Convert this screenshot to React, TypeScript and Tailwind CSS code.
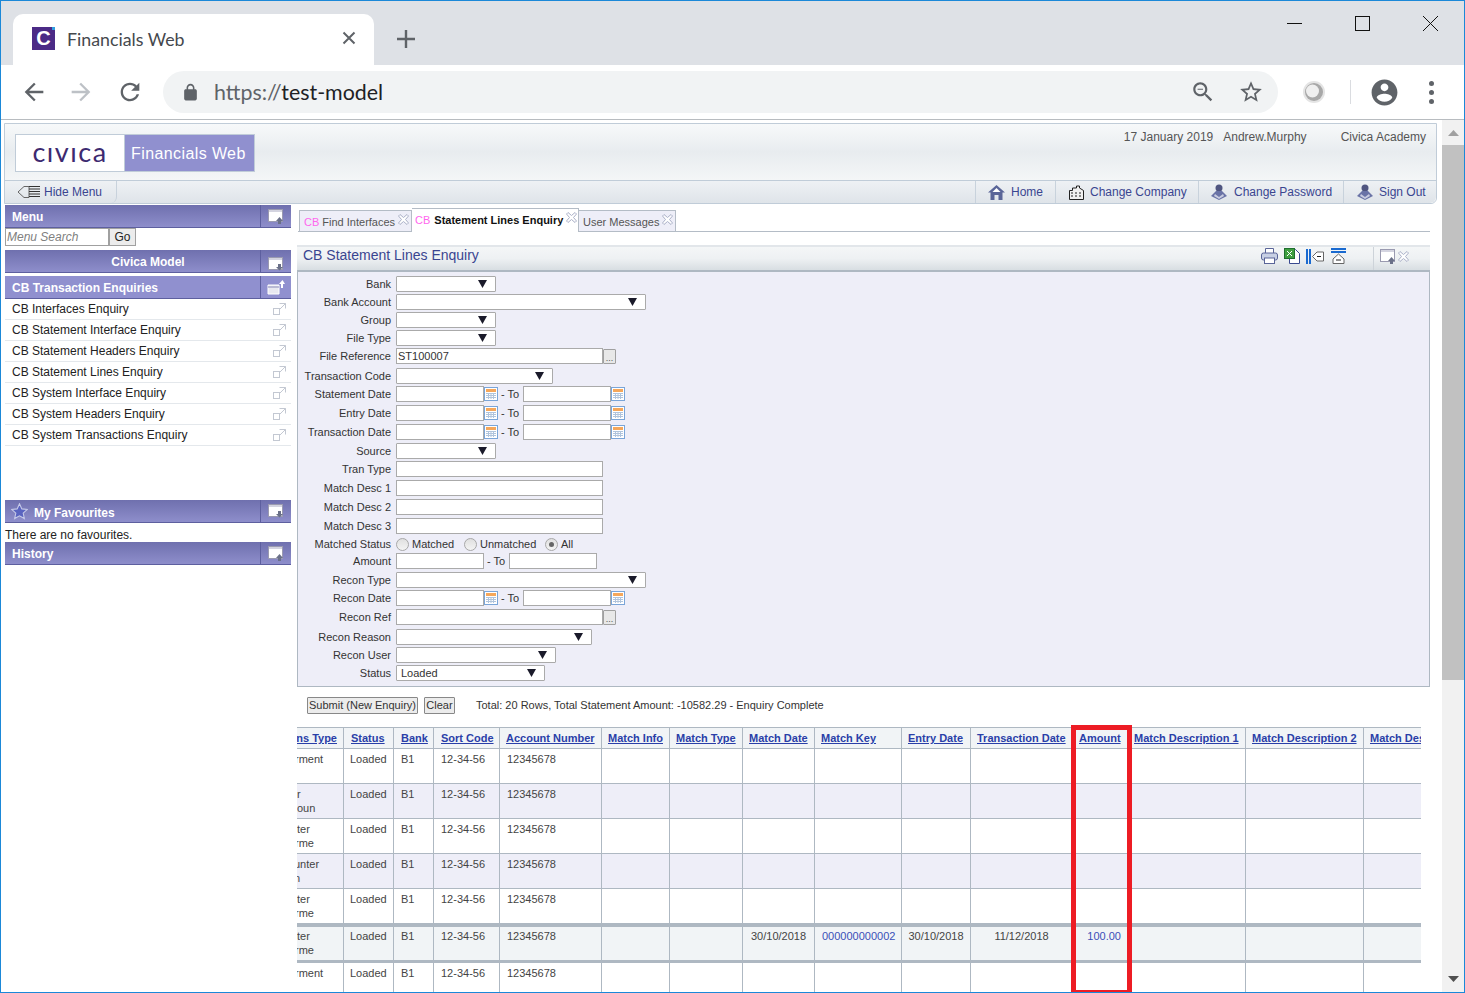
import React from 'react';

const FONT = "font-['Liberation_Sans',Arial,sans-serif]";

// little svg helpers for the chrome and the app icons
function Mat({ d, className }: { d: string; className: string }) {
  return (
    <svg viewBox="0 0 24 24" className={className} fill="currentColor">
      <path d={d} />
    </svg>
  );
}

function WinIcon({ down = false }: { down?: boolean }) {
  return (
    <svg width="17" height="15" viewBox="0 0 17 15">
      <rect x="0.5" y="0.5" width="14" height="12" fill="#fff" stroke="#9a9ab0" />
      <rect x="1" y="1" width="13" height="2" fill="#d4d4e0" />
      {down ? (
        <path d="M10 7h3v3h2l-3.500 3.500L8 10h2z" fill="#6a7088" />
      ) : (
        <path d="M10 15v-3H8l3.500-4 3.500 4h-2v3z" fill="#6a7088" />
      )}
    </svg>
  );
}

function ExtIcon() {
  return (
    <svg width="13" height="13" viewBox="0 0 13 13" fill="none" stroke="#c3c8d2">
      <rect x="0.5" y="5.5" width="6" height="6" />
      <path d="M6.5 0.5h6v5M12.5 0.5L6.5 6.5" />
    </svg>
  );
}

function CloseX() {
  return (
    <svg width="11" height="11" viewBox="0 0 11 11" fill="#fff" stroke="#aab0c8" className="shrink-0">
      <path d="M2 .5L5.500 3.500 9 .5l1.500 1.500L7.500 5.500l3 3.500L9 10.500 5.500 7.500 2 10.500.5 9l3-3.500-3-3.500z" />
    </svg>
  );
}

function CalIcon() {
  return (
    <svg width="14" height="14" viewBox="0 0 14 14" className="shrink-0">
      <rect x="0.5" y="0.5" width="13" height="13" fill="#fff" stroke="#7aa5d8" />
      <rect x="2" y="2" width="10" height="3" fill="#f5a75b" />
      <path d="M2 6.500h10M2 8.500h10M2 10.500h10M4.500 6v6M7 6v6M9.500 6v6" stroke="#b0c4dc" />
    </svg>
  );
}

function Person() {
  return (
    <svg width="18" height="16" viewBox="0 0 18 16" className="shrink-0">
      <circle cx="9" cy="4" r="3.500" fill="#4f5580" />
      <path d="M1 12l5-5h6l5 5-8 4z" fill="#6a73a6" />
      <path d="M5 10l4 3 4-3 1 2-5 3-5-3z" fill="#c8cce0" />
    </svg>
  );
}

function Select({ w, value = '' }: { w: string; value?: string }) {
  return (
    <div className={`${w} h-4 bg-white border border-[#aaaaaa] rounded-[1px] flex items-center justify-between pl-[4px] shrink-0`}>
      <span>{value}</span>
      <svg width="9" height="8" viewBox="0 0 9 8" className="mr-[8px]">
        <path d="M0 0h9L4.500 8z" fill="#1a1a2a" />
      </svg>
    </div>
  );
}

function Input({ w, value = '' }: { w: string; value?: string }) {
  return <div className={`${w} h-4 bg-white border border-[#aaaaaa] flex items-center pl-px shrink-0`}>{value}</div>;
}

function Dots() {
  return (
    <div className="w-[13px] h-[15px] bg-[#e8e8e8] border border-[#a0a0a0] rounded-[1px] flex items-end justify-center text-[9px] leading-[10px] text-[#555] shrink-0">...</div>
  );
}

function DateRange() {
  return (
    <>
      <Input w="w-[88px]" />
      <CalIcon />
      <span className="ml-[3px] mr-[3px] w-[19px] whitespace-nowrap">- To</span>
      <Input w="w-[88px]" />
      <CalIcon />
    </>
  );
}

function Radio({ label, on = false, cls }: { label: string; on?: boolean; cls: string }) {
  return (
    <div className={`flex items-center ${cls}`}>
      <span className="w-[13px] h-[13px] rounded-full border border-[#a8a8a8] bg-gradient-to-b from-[#e0e0e0] to-[#f4f4f4] flex items-center justify-center mr-[3px]">
        {on && <span className="w-[5px] h-[5px] rounded-full bg-[#666]" />}
      </span>
      {label}
    </div>
  );
}

const formRows: { label: string; cls: string; el: React.ReactNode }[] = [
  { label: 'Bank', cls: '', el: <Select w="w-[100px]" /> },
  { label: 'Bank Account', cls: '', el: <Select w="w-[250px]" /> },
  { label: 'Group', cls: '', el: <Select w="w-[100px]" /> },
  { label: 'File Type', cls: '', el: <Select w="w-[100px]" /> },
  { label: 'File Reference', cls: '', el: <><Input w="w-[207px]" value="ST100007" /><Dots /></> },
  { label: 'Transaction Code', cls: 'mt-[2px]', el: <Select w="w-[157px]" /> },
  { label: 'Statement Date', cls: '', el: <DateRange /> },
  { label: 'Entry Date', cls: 'mt-px', el: <DateRange /> },
  { label: 'Transaction Date', cls: 'mt-px', el: <DateRange /> },
  { label: 'Source', cls: 'mt-px', el: <Select w="w-[100px]" /> },
  { label: 'Tran Type', cls: '', el: <Input w="w-[207px]" /> },
  { label: 'Match Desc 1', cls: 'mt-px', el: <Input w="w-[207px]" /> },
  { label: 'Match Desc 2', cls: 'mt-px', el: <Input w="w-[207px]" /> },
  { label: 'Match Desc 3', cls: 'mt-px', el: <Input w="w-[207px]" /> },
  {
    label: 'Matched Status',
    cls: '',
    el: (
      <>
        <Radio label="Matched" cls="w-[68px]" />
        <Radio label="Unmatched" cls="w-[81px]" />
        <Radio label="All" on cls="" />
      </>
    ),
  },
  {
    label: 'Amount',
    cls: '-mt-px',
    el: (
      <>
        <Input w="w-[88px]" />
        <span className="ml-[3px] mr-[3px] w-[19px] whitespace-nowrap">- To</span>
        <Input w="w-[88px]" />
      </>
    ),
  },
  { label: 'Recon Type', cls: 'mt-px', el: <Select w="w-[250px]" /> },
  { label: 'Recon Date', cls: '', el: <DateRange /> },
  { label: 'Recon Ref', cls: 'mt-px', el: <><Input w="w-[207px]" /><Dots /></> },
  { label: 'Recon Reason', cls: 'mt-[2px]', el: <Select w="w-[196px]" /> },
  { label: 'Recon User', cls: '', el: <Select w="w-[160px]" /> },
  { label: 'Status', cls: '', el: <Select w="w-[149px]" value="Loaded" /> },
];

const menuItems = [
  'CB Interfaces Enquiry',
  'CB Statement Interface Enquiry',
  'CB Statement Headers Enquiry',
  'CB Statement Lines Enquiry',
  'CB System Interface Enquiry',
  'CB System Headers Enquiry',
  'CB System Transactions Enquiry',
];

// column widths come from the picture, first column is scrolled off to the left
const columns: { title: string; w: string; pl: string }[] = [
  { title: 'ns Type', w: 'w-[47px]', pl: 'justify-end pr-[6px]' },
  { title: 'Status', w: 'w-[50px]', pl: 'pl-[7px]' },
  { title: 'Bank', w: 'w-[40px]', pl: 'pl-[7px]' },
  { title: 'Sort Code', w: 'w-[66px]', pl: 'pl-[7px]' },
  { title: 'Account Number', w: 'w-[102px]', pl: 'pl-[6px]' },
  { title: 'Match Info', w: 'w-[68px]', pl: 'pl-[6px]' },
  { title: 'Match Type', w: 'w-[73px]', pl: 'pl-[6px]' },
  { title: 'Match Date', w: 'w-[72px]', pl: 'pl-[6px]' },
  { title: 'Match Key', w: 'w-[87px]', pl: 'pl-[6px]' },
  { title: 'Entry Date', w: 'w-[69px]', pl: 'pl-[6px]' },
  { title: 'Transaction Date', w: 'w-[102px]', pl: 'pl-[6px]' },
  { title: 'Amount', w: 'w-[55px]', pl: 'pl-[6px]' },
  { title: 'Match Description 1', w: 'w-[118px]', pl: 'pl-[6px]' },
  { title: 'Match Description 2', w: 'w-[118px]', pl: 'pl-[6px]' },
  { title: 'Match Description 3', w: 'w-[118px]', pl: 'pl-[6px]' },
];

// what is left visible of the scrolled off column, with its nudge
const rows = [
  { first: [['rment', '-ml-[2px]'], ['', '']], bg: 'bg-white', h: 'h-[35px]', sel: false },
  { first: [['r', ''], ['oun', '']], bg: 'bg-[#eeeef8]', h: 'h-[35px]', sel: false },
  { first: [['ter', ''], ['rme', '-ml-[2px]']], bg: 'bg-white', h: 'h-[35px]', sel: false },
  { first: [['unter', '-ml-[3px]'], ['n', '-ml-[3px]']], bg: 'bg-[#eeeef8]', h: 'h-[35px]', sel: false },
  { first: [['ter', ''], ['rme', '-ml-[2px]']], bg: 'bg-white', h: 'h-[35px]', sel: false },
  { first: [['ter', ''], ['rme', '-ml-[2px]']], bg: 'bg-[#f1f4f6]', h: 'h-[39px]', sel: true },
  { first: [['rment', '-ml-[2px]'], ['', '']], bg: 'bg-white', h: 'h-[35px]', sel: false },
];

function cellsFor(sel: boolean) {
  return [
    '', 'Loaded', 'B1', '12-34-56', '12345678', '', '',
    sel ? '30/10/2018' : '',
    sel ? '000000000002' : '',
    sel ? '30/10/2018' : '',
    sel ? '11/12/2018' : '',
    sel ? '100.00' : '',
    '', '', '',
  ];
}

function cellClass(i: number) {
  if (i === 11) return 'text-right pr-[6px] text-[#3a4fb8]';
  if (i === 8) return 'pl-[7px] text-[#3a4fb8]';
  if (i === 7 || i === 9 || i === 10) return 'text-center text-[#444]';
  if (i === 1) return 'pl-[6px] text-[#444]';
  return 'pl-[7px] text-[#444]';
}

function MenuHead({ children, light = false, down = false, open = false, center = false }: {
  children: React.ReactNode; light?: boolean; down?: boolean; open?: boolean; center?: boolean;
}) {
  return (
    <div className={`h-[23px] flex border-b border-[#5d5f9f] font-bold text-[12px] text-white ${light ? 'bg-[#9090cf]' : 'bg-gradient-to-b from-[#6f70ae] to-[#8e8ecb]'}`}>
      <div className={`flex-1 flex items-center pt-[2px] ${center ? 'justify-center pl-[31px]' : 'pl-[7px]'}`}>{children}</div>
      <div className={`w-[31px] border-l border-[#5d5f9f] flex items-center justify-center ${center ? 'pt-[6px]' : ''}`}>
        {open ? (
          <svg width="18" height="15" viewBox="0 0 18 15">
            <path d="M1 5h11v9H1z" fill="#e8e8f0" stroke="#fff" />
            <path d="M1 7h11" stroke="#8a8ab8" />
            <path d="M14 8V4h-2l3.500-4L18 4h-2v4z" fill="#fff" />
          </svg>
        ) : (
          <WinIcon down={down} />
        )}
      </div>
    </div>
  );
}

export default function App() {
  return (
    <div className={`${FONT} w-[1465px] h-[993px] overflow-hidden border border-[#1b88d8] bg-white text-[11px] text-[#222] flex flex-col`}>
      {/* tab strip */}
      <div className="h-[64px] bg-[#dee1e6] flex items-end pl-3 shrink-0 font-['Lato',sans-serif]">
        <div className="w-[361px] h-[51px] bg-white rounded-t-[10px] flex items-center pl-[19px] pb-[3px]">
          <span className="relative w-[23px] h-[23px] bg-[#4b2a86] flex items-center justify-center text-white font-bold text-[20px] leading-none font-['Liberation_Sans',sans-serif]">
            C
            <span className="absolute right-0 top-0 w-[3px] h-[3px] bg-[#2f9fe0]" />
          </span>
          <span className="ml-3 pt-[3px] text-[17.800px] text-[#45484d] w-[272px]">Financials Web</span>
          <svg width="14" height="14" viewBox="0 0 14 14" stroke="#5f6368" strokeWidth="2" className="ml-[3px]">
            <path d="M1.500 1.500l11 11M12.500 1.500l-11 11" />
          </svg>
        </div>
        <svg width="18" height="18" viewBox="0 0 18 18" stroke="#5f6368" strokeWidth="2.400" className="ml-[23px] mb-[17px]">
          <path d="M9 0v18M0 9h18" />
        </svg>
        <div className="ml-auto flex items-center self-start mt-[15px] mr-[26px] gap-[53px]">
          <svg width="15" height="1" className="block"><rect width="15" height="1" fill="#111" /></svg>
          <div className="w-[15px] h-[15px] border border-[#111]" />
          <svg width="15" height="15" viewBox="0 0 15 15" stroke="#111"><path d="M0 0l15 15M15 0L0 15" /></svg>
        </div>
      </div>

      {/* toolbar */}
      <div className="h-[55px] bg-white border-b border-[#b8bcc0] flex items-center shrink-0 font-['Lato',sans-serif]">
        <Mat className="w-[28px] h-[28px] ml-[19px] text-[#5f6368]" d="M20 11H7.830l5.590-5.590L12 4l-8 8 8 8 1.410-1.410L7.830 13H20v-2z" />
        <Mat className="w-[28px] h-[28px] ml-[19px] text-[#bdc1c6]" d="M12 4l-1.410 1.410L16.170 11H4v2h12.170l-5.580 5.590L12 20l8-8z" />
        <Mat className="w-[28px] h-[28px] ml-[21px] text-[#5f6368]" d="M17.650 6.350C16.200 4.900 14.210 4 12 4c-4.420 0-7.990 3.580-7.990 8s3.570 8 7.990 8c3.730 0 6.840-2.550 7.730-6h-2.080c-.82 2.330-3.040 4-5.650 4-3.310 0-6-2.690-6-6s2.690-6 6-6c1.660 0 3.140.69 4.220 1.780L13 11h7V4l-2.350 2.350z" />
        <div className="ml-[19px] w-[1115px] h-[42px] bg-[#f1f3f4] rounded-full flex items-center pl-[18px]">
          <Mat className="w-[19px] h-[19px] text-[#5f6368]" d="M18 8h-1V6c0-2.760-2.240-5-5-5S7 3.240 7 6v2H6c-1.100 0-2 .9-2 2v10c0 1.100.9 2 2 2h12c1.100 0 2-.9 2-2V10c0-1.100-.9-2-2-2zM9 6c0-1.660 1.340-3 3-3s3 1.340 3 3v2H9V6z" />
          <span className="ml-[14px] pt-px text-[21.400px] text-[#5f6368]">https://<span className="text-[#202124]">test-model</span></span>
          <Mat className="w-[26px] h-[26px] ml-auto text-[#5f6368]" d="M15.500 14h-.79l-.28-.27C15.410 12.590 16 11.110 16 9.500 16 5.910 13.090 3 9.500 3S3 5.910 3 9.500 5.910 16 9.500 16c1.610 0 3.090-.59 4.230-1.570l.27.28v.79l5 4.990L20.490 19l-4.990-5zm-6 0C7.010 14 5 11.990 5 9.500S7.010 5 9.500 5 14 7.010 14 9.500 11.990 14 9.500 14zM7 9h5v1H7z" />
          <Mat className="w-[26px] h-[26px] ml-[22px] mr-[14px] text-[#5f6368]" d="M22 9.240l-7.190-.62L12 2 9.190 8.630 2 9.240l5.460 4.730L5.820 21 12 17.270 18.180 21l-1.630-7.030L22 9.240zM12 15.400l-3.760 2.270 1-4.280-3.320-2.880 4.380-.38L12 6.100l1.710 4.040 4.380.38-3.320 2.880 1 4.280L12 15.400z" />
        </div>
        <svg width="22" height="22" viewBox="0 0 22 22" className="ml-[25px]">
          <circle cx="11" cy="11" r="11" fill="#e4e4e4" />
          <circle cx="11" cy="11" r="9" fill="#a8a8a8" />
          <circle cx="9.500" cy="10" r="6.500" fill="#efefef" />
        </svg>
        <span className="ml-[25px] w-px h-[24px] bg-[#dadce0]" />
        <Mat className="w-[31px] h-[31px] ml-[18px] text-[#5f6368]" d="M12 2C6.480 2 2 6.480 2 12s4.480 10 10 10 10-4.480 10-10S17.520 2 12 2zm0 3c1.660 0 3 1.340 3 3s-1.340 3-3 3-3-1.340-3-3 1.340-3 3-3zm0 14.200c-2.500 0-4.710-1.280-6-3.220.03-1.990 4-3.080 6-3.080 1.990 0 5.970 1.090 6 3.080-1.290 1.940-3.500 3.220-6 3.220z" />
        <div className="ml-[29px] flex flex-col gap-[4px]">
          <span className="w-[5px] h-[5px] rounded-full bg-[#5f6368]" />
          <span className="w-[5px] h-[5px] rounded-full bg-[#5f6368]" />
          <span className="w-[5px] h-[5px] rounded-full bg-[#5f6368]" />
        </div>
      </div>

      {/* page + scrollbar */}
      <div className="flex-1 flex min-h-0 relative">
        <div className="w-[1441px] pl-[3px] pt-[3px] flex flex-col min-h-0 shrink-0">
          {/* app header */}
          <div className="w-[1433px] h-[81px] border border-[#c0ccd8] rounded-br-[6px] flex flex-col shrink-0">
            <div className="h-[56px] bg-gradient-to-b from-[#f7f9fa] via-[#e8ecef] to-[#f4f6f7] flex justify-between pl-[10px] pr-[10px]">
              <div className="flex mt-[10px] h-[38px]">
                <div className="w-[110px] bg-white border border-[#c0ccd8] flex items-center justify-center font-['Lato',sans-serif] text-[#3d2a70] text-[27px] tracking-[1.500px] leading-none pb-[3px]">cıvıca</div>
                <div className="w-[130px] bg-[#9090cf] border border-[#c0ccd8] border-l-0 flex items-center pl-[6px] pt-px text-white text-[16px] tracking-[0.400px]">Financials Web</div>
              </div>
              <div className="flex mt-[4px] text-[12px] text-[#555]">
                <span>17 January 2019</span>
                <span className="ml-[10px]">Andrew.Murphy</span>
                <span className="ml-[34px]">Civica Academy</span>
              </div>
            </div>
            <div className="flex-1 border-t border-[#c0ccd8] bg-gradient-to-b from-[#eef1f4] to-[#dfe4e9] flex justify-between text-[12px] text-[#3a4590] rounded-br-[6px]">
              <div className="w-[112px] border-r border-[#c8d2dc] rounded-b-[6px] flex items-center pl-3 gap-[4px]">
                <svg width="23" height="14" viewBox="0 0 23 14" fill="none" stroke="#666">
                  <path d="M7 1.500L1 7l6 5.500h5v-11z" />
                  <path d="M12 1.500h11M12 4h11M12 6.500h11M12 9h11M12 11.500h11" stroke="#333" />
                </svg>
                Hide Menu
              </div>
              <div className="flex">
                <div className="flex items-center w-[80px] border-l border-[#c8d2dc] pl-[12px] gap-[6px]">
                  <svg width="17" height="15" viewBox="0 0 17 15">
                    <path d="M8.500 0L0 7.500h2.500V15h4v-5h4v5h4V7.500H17z" fill="#5a6598" />
                    <path d="M8.500 3L4.500 7h8z" fill="#fff" />
                  </svg>
                  Home
                </div>
                <div className="flex items-center w-[143px] border-l border-[#c8d2dc] pl-[13px] gap-[6px]">
                  <svg width="15" height="15" viewBox="0 0 15 15">
                    <path d="M.5 5.500h3V3h4V1h3v2l4 2.500v9H.5z" fill="#f0f0f0" stroke="#222" />
                    <path d="M2 8h2M6 8h2M10 8h2M2 11h2M6 11h2M10 11h2" stroke="#222" />
                  </svg>
                  Change Company
                </div>
                <div className="flex items-center w-[145px] border-l border-[#c8d2dc] pl-[11px] gap-[6px]">
                  <Person />
                  Change Password
                </div>
                <div className="flex items-center w-[93px] border-l border-[#c8d2dc] pl-[12px] gap-[5px]">
                  <Person />
                  Sign Out
                </div>
              </div>
            </div>
          </div>

          <div className="flex-1 flex min-h-0 mt-[1px]">
            {/* left menu */}
            <div className="w-[287px] shrink-0 pl-px">
              <MenuHead>Menu</MenuHead>
              <div className="h-[22px] flex items-start">
                <div className="w-[104px] h-[18px] border border-[#a0a0a0] bg-white pl-px italic text-[12px] text-[#808080] leading-[16px]">Menu Search</div>
                <div className="w-[27px] h-[18px] border border-[#a0a0a0] bg-[#ececec] text-[12px] text-center leading-[16px]">Go</div>
              </div>
              <MenuHead center down>Civica Model</MenuHead>
              <div className="mt-[3px]">
                <MenuHead light open>CB Transaction Enquiries</MenuHead>
              </div>
              <div>
                {menuItems.map((m) => (
                  <div key={m} className="h-[21px] border-b border-[#e4e8ec] flex items-center justify-between pl-[7px] pr-[5px] text-[12px] text-[#222]">
                    {m}
                    <ExtIcon />
                  </div>
                ))}
              </div>
              <div className="mt-[54px]">
                <MenuHead down>
                  <svg width="17" height="17" viewBox="0 0 24 24" className="mr-[6px] -ml-px -mt-[2px]">
                    <path d="M12 1l3.300 7.300 7.700.8-5.800 5.200 1.700 7.700L12 18l-6.900 4 1.700-7.700L1 9.100l7.700-.8z" fill="#5a64c0" stroke="#c6cae8" strokeWidth="1.500" />
                  </svg>
                  <span className="pt-px">My Favourites</span>
                </MenuHead>
              </div>
              <div className="h-[19px] pt-[5px] text-[12px] leading-[15px]">There are no favourites.</div>
              <MenuHead>History</MenuHead>
            </div>

            {/* main content */}
            <div className="w-[1133px] ml-[6px] flex flex-col min-h-0">
              {/* tabs */}
              <div className="h-[27px] ml-[1px] flex items-end border-b border-[#b4bcc6] shrink-0">
                <div className="h-[22px] -mb-px ml-px w-[113px] bg-[#eeeef8] border border-[#b4bcc6] flex items-start pt-[3px] pl-[4px] gap-[3px] whitespace-nowrap text-[#555]">
                  <span><span className="text-[#ff66ee]">CB </span>Find Interfaces</span>
                  <CloseX />
                </div>
                <div className="h-[24px] -mb-px w-[167px] bg-white border-t border-r border-[#b4bcc6] flex items-start pt-[3px] pl-[3px] gap-[3px] whitespace-nowrap text-[#111]">
                  <span className="font-bold"><span className="text-[#ff66ee] font-normal mr-px">CB </span>Statement Lines Enquiry</span>
                  <CloseX />
                </div>
                <div className="h-[22px] -mb-px w-[97px] bg-[#eeeef8] border border-l-0 border-[#b4bcc6] flex items-start pt-[3px] pl-[4px] gap-[3px] whitespace-nowrap text-[#555]">
                  User Messages
                  <CloseX />
                </div>
              </div>

              {/* enquiry panel */}
              <div className="mt-[13px] h-[27px] border-t-2 border-[#e2e6ea] border-b-2 border-b-[#aeb8c2] bg-gradient-to-b from-[#f4f6f7] via-[#eef1f3] to-[#d8dee2] flex items-center justify-between pl-[6px] shrink-0">
                <span className="text-[14px] text-[#3a4590] pb-[7px]">CB Statement Lines Enquiry</span>
                <div className="flex items-center mr-[21px] h-full">
                  <div className="flex items-center h-full pb-[5px]">
                    <svg width="17" height="16" viewBox="0 0 17 16" className="mr-[6px]">
                      <path d="M4.500 5V.5h8V5" fill="#fff" stroke="#5a6598" />
                      <rect x="0.500" y="5" width="16" height="7" rx="2" fill="#c8d0e4" stroke="#5a6598" />
                      <rect x="3.500" y="10" width="10" height="5.500" fill="#fff" stroke="#5a6598" />
                    </svg>
                    <svg width="16" height="16" viewBox="0 0 16 16" className="mr-[6px]">
                      <path d="M5.500 1.500h6l4 4v10h-10z" fill="#fff" stroke="#3a4a90" />
                      <rect x="0.500" y="0.500" width="10" height="10" fill="#3f9f3f" stroke="#1f6f2f" />
                      <path d="M3 3l5 5M8 3l-5 5" stroke="#fff" />
                    </svg>
                    <svg width="18" height="15" viewBox="0 0 18 15" className="mr-[7px]">
                      <path d="M1 0v15M4 0v15" stroke="#1a6ad0" strokeWidth="2" />
                      <path d="M6.500 7.500L11 3h6.500v9H11z" fill="#fff" stroke="#666" />
                      <path d="M11 7.500h4" stroke="#222" />
                    </svg>
                    <svg width="15" height="16" viewBox="0 0 15 16" className="mr-[27px]">
                      <path d="M0 1h15M0 4h15" stroke="#1a6ad0" strokeWidth="2" />
                      <path d="M7.500 6L2 11v4.500h11V11z" fill="#fff" stroke="#666" />
                      <path d="M5 12h5" stroke="#222" />
                    </svg>
                  </div>
                  <div className="flex items-center gap-px border-l border-[#cdd3d9] pl-[6px] pb-[5px] h-full">
                    <WinIcon />
                    <CloseX />
                  </div>
                </div>
              </div>
              <div className="h-[415px] bg-[#eeeef8] border border-t-0 border-[#aeb8c2] pt-[3px] text-[#333] shrink-0">
                {formRows.map((r) => (
                  <div key={r.label} className={`h-[18px] flex items-center ${r.cls}`}>
                    <div className="w-[93px] mr-[5px] whitespace-nowrap flex justify-end">{r.label}</div>
                    {r.el}
                  </div>
                ))}
              </div>

              {/* buttons */}
              <div className="mt-[9px] h-[18px] flex items-center shrink-0 text-[#333]">
                <div className="ml-[10px] w-[111px] h-[17px] bg-[#ececec] border border-[#888] rounded-[1px] flex items-center justify-center whitespace-nowrap">Submit (New Enquiry)</div>
                <div className="ml-[6px] w-[31px] h-[17px] bg-[#ececec] border border-[#888] rounded-[1px] flex items-center justify-center">Clear</div>
                <span className="ml-[21px]">Total: 20 Rows, Total Statement Amount: -10582.29 - Enquiry Complete</span>
              </div>

              {/* results table, scrolled in its own box */}
              <div className="mt-[13px] w-[1124px] flex-1 overflow-hidden">
                <div className="w-[1300px]">
                  <div className="flex h-[22px] bg-[#f1f4f6] border-t border-b border-[#aeb8c2]">
                    {columns.map((c) => (
                      <div key={c.title} className={`${c.w} ${c.pl} shrink-0 overflow-hidden border-r border-[#aeb8c2] font-bold text-[#2a3fa8] underline flex items-center whitespace-nowrap`}>
                        {c.title}
                      </div>
                    ))}
                  </div>
                  {rows.map((r, ri) => {
                    const cells = cellsFor(r.sel);
                    return (
                      <div key={ri} className={`flex ${r.h} ${r.bg} ${r.sel ? 'border-t-[3px] border-b-[3px] border-[#aeb8c2]' : 'border-b border-[#aeb8c2]'}`}>
                        {columns.map((c, i) => (
                          <div key={c.title} className={`${c.w} shrink-0 overflow-hidden border-r border-[#aeb8c2] leading-[14px] ${r.sel ? 'pt-[2px]' : 'pt-[3px]'} ${i === 0 ? 'text-[#444]' : cellClass(i)}`}>
                            {i === 0 ? (
                              <div className="whitespace-nowrap">
                                <div className={r.first[0][1]}>{r.first[0][0]}</div>
                                <div className={r.first[1][1]}>{r.first[1][0]}</div>
                              </div>
                            ) : (
                              cells[i]
                            )}
                          </div>
                        ))}
                      </div>
                    );
                  })}
                </div>
              </div>
            </div>
          </div>
        </div>

        {/* scrollbar */}
        <div className="w-[23px] bg-[#f1f1f1] flex flex-col items-center shrink-0">
          <svg width="11" height="6" viewBox="0 0 11 6" className="mt-[10px]"><path d="M5.500 0L11 6H0z" fill="#a0a0a0" /></svg>
          <div className="w-full h-[535px] bg-[#c1c1c1] mt-[9px]" />
          <svg width="11" height="6" viewBox="0 0 11 6" className="mt-auto mb-[10px]"><path d="M0 0h11L5.500 6z" fill="#505050" /></svg>
        </div>

        {/* red highlight box laid over the Amount column */}
        <div className="absolute left-[1070px] top-[605px] w-[61px] h-[270px] border-[5px] border-[#ed1c24]" />
      </div>
    </div>
  );
}
